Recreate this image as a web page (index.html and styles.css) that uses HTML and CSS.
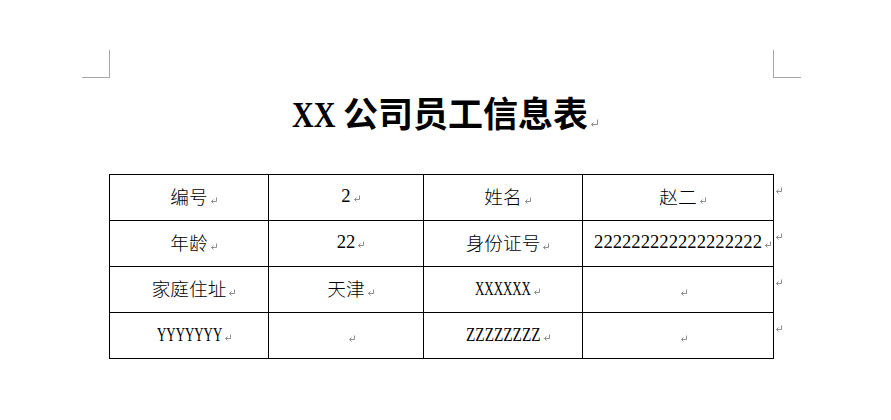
FILE: index.html
```html
<!DOCTYPE html>
<html lang="zh-CN">
<head>
<meta charset="utf-8">
<title>XX 公司员工信息表</title>
<link rel="stylesheet" href="styles.css">
</head>
<body>
<div class="page">
  <div class="marks">
    <span class="corner corner-l"></span>
    <span class="corner corner-r"></span>
  </div>
  <h1 class="title"><span class="narrow tx"><span>XX</span></span> 公司员工信息表<svg class="pm-t" width="9" height="8" viewBox="0 0 9 8"><path d="M7.5 0.5V5.5H1.5M3.5 3.5L1.5 5.5L3.5 7.5" fill="none" stroke="#8c8c8c" stroke-width="1"/></svg></h1>
  <table class="info">
    <colgroup>
      <col class="c1"><col class="c2"><col class="c3"><col class="c4"><col class="c5">
    </colgroup>
    <tr>
      <td>编号<i class="pm"><svg width="8" height="7" viewBox="0 0 8 7"><path d="M6.5 0.5V4.5H1.5M3.5 2.5L1.5 4.5L3.5 6.5" fill="none" stroke="#8f8f8f" stroke-width="1"/></svg></i></td>
      <td class="lat">2<i class="pm"><svg width="8" height="7" viewBox="0 0 8 7"><path d="M6.5 0.5V4.5H1.5M3.5 2.5L1.5 4.5L3.5 6.5" fill="none" stroke="#8f8f8f" stroke-width="1"/></svg></i></td>
      <td>姓名<i class="pm"><svg width="8" height="7" viewBox="0 0 8 7"><path d="M6.5 0.5V4.5H1.5M3.5 2.5L1.5 4.5L3.5 6.5" fill="none" stroke="#8f8f8f" stroke-width="1"/></svg></i></td>
      <td>赵二<i class="pm"><svg width="8" height="7" viewBox="0 0 8 7"><path d="M6.5 0.5V4.5H1.5M3.5 2.5L1.5 4.5L3.5 6.5" fill="none" stroke="#8f8f8f" stroke-width="1"/></svg></i></td>
      <td class="end"><svg width="8" height="7" viewBox="0 0 8 7"><path d="M6.5 0.5V4.5H1.5M3.5 2.5L1.5 4.5L3.5 6.5" fill="none" stroke="#8f8f8f" stroke-width="1"/></svg></td>
    </tr>
    <tr>
      <td>年龄<i class="pm"><svg width="8" height="7" viewBox="0 0 8 7"><path d="M6.5 0.5V4.5H1.5M3.5 2.5L1.5 4.5L3.5 6.5" fill="none" stroke="#8f8f8f" stroke-width="1"/></svg></i></td>
      <td class="lat">22<i class="pm"><svg width="8" height="7" viewBox="0 0 8 7"><path d="M6.5 0.5V4.5H1.5M3.5 2.5L1.5 4.5L3.5 6.5" fill="none" stroke="#8f8f8f" stroke-width="1"/></svg></i></td>
      <td>身份证号<i class="pm"><svg width="8" height="7" viewBox="0 0 8 7"><path d="M6.5 0.5V4.5H1.5M3.5 2.5L1.5 4.5L3.5 6.5" fill="none" stroke="#8f8f8f" stroke-width="1"/></svg></i></td>
      <td class="lat">222222222222222222<i class="pm"><svg width="8" height="7" viewBox="0 0 8 7"><path d="M6.5 0.5V4.5H1.5M3.5 2.5L1.5 4.5L3.5 6.5" fill="none" stroke="#8f8f8f" stroke-width="1"/></svg></i></td>
      <td class="end"><svg width="8" height="7" viewBox="0 0 8 7"><path d="M6.5 0.5V4.5H1.5M3.5 2.5L1.5 4.5L3.5 6.5" fill="none" stroke="#8f8f8f" stroke-width="1"/></svg></td>
    </tr>
    <tr>
      <td>家庭住址<i class="pm"><svg width="8" height="7" viewBox="0 0 8 7"><path d="M6.5 0.5V4.5H1.5M3.5 2.5L1.5 4.5L3.5 6.5" fill="none" stroke="#8f8f8f" stroke-width="1"/></svg></i></td>
      <td>天津<i class="pm"><svg width="8" height="7" viewBox="0 0 8 7"><path d="M6.5 0.5V4.5H1.5M3.5 2.5L1.5 4.5L3.5 6.5" fill="none" stroke="#8f8f8f" stroke-width="1"/></svg></i></td>
      <td><span class="narrow x6"><span>XXXXXX</span></span><i class="pm"><svg width="8" height="7" viewBox="0 0 8 7"><path d="M6.5 0.5V4.5H1.5M3.5 2.5L1.5 4.5L3.5 6.5" fill="none" stroke="#8f8f8f" stroke-width="1"/></svg></i></td>
      <td><i class="pm"><svg width="8" height="7" viewBox="0 0 8 7"><path d="M6.5 0.5V4.5H1.5M3.5 2.5L1.5 4.5L3.5 6.5" fill="none" stroke="#8f8f8f" stroke-width="1"/></svg></i></td>
      <td class="end"><svg width="8" height="7" viewBox="0 0 8 7"><path d="M6.5 0.5V4.5H1.5M3.5 2.5L1.5 4.5L3.5 6.5" fill="none" stroke="#8f8f8f" stroke-width="1"/></svg></td>
    </tr>
    <tr>
      <td><span class="narrow y7"><span>YYYYYYY</span></span><i class="pm"><svg width="8" height="7" viewBox="0 0 8 7"><path d="M6.5 0.5V4.5H1.5M3.5 2.5L1.5 4.5L3.5 6.5" fill="none" stroke="#8f8f8f" stroke-width="1"/></svg></i></td>
      <td><i class="pm"><svg width="8" height="7" viewBox="0 0 8 7"><path d="M6.5 0.5V4.5H1.5M3.5 2.5L1.5 4.5L3.5 6.5" fill="none" stroke="#8f8f8f" stroke-width="1"/></svg></i></td>
      <td><span class="narrow z8"><span>ZZZZZZZZ</span></span><i class="pm"><svg width="8" height="7" viewBox="0 0 8 7"><path d="M6.5 0.5V4.5H1.5M3.5 2.5L1.5 4.5L3.5 6.5" fill="none" stroke="#8f8f8f" stroke-width="1"/></svg></i></td>
      <td><i class="pm"><svg width="8" height="7" viewBox="0 0 8 7"><path d="M6.5 0.5V4.5H1.5M3.5 2.5L1.5 4.5L3.5 6.5" fill="none" stroke="#8f8f8f" stroke-width="1"/></svg></i></td>
      <td class="end"><svg width="8" height="7" viewBox="0 0 8 7"><path d="M6.5 0.5V4.5H1.5M3.5 2.5L1.5 4.5L3.5 6.5" fill="none" stroke="#8f8f8f" stroke-width="1"/></svg></td>
    </tr>
  </table>
</div>
</body>
</html>
```
FILE: styles.css
```css
html, body {
  margin: 0;
  padding: 0;
  background: #fff;
}
body {
  font-family: "Noto Sans CJK SC", "Noto Sans", sans-serif;
  color: #000;
}
.page {
  width: 891px;
  height: 420px;
  box-sizing: border-box;
  padding-top: 50px;
  overflow: hidden;
}
.marks {
  display: flex;
  justify-content: space-between;
  padding: 0 90px 0 82px;
}
.corner {
  display: block;
  width: 28px;
  height: 28px;
  box-sizing: border-box;
  border-bottom: 1px solid #a6a6a6;
}
.corner-l { border-right: 1px solid #a6a6a6; }
.corner-r { border-left: 1px solid #a6a6a6; }

.title {
  margin: 16px 0 0;
  text-align: center;
  font-size: 35px;
  line-height: 36px;
  font-weight: 700;
  white-space: nowrap;
}
.pm-t {
  margin-left: 2px;
  vertical-align: baseline;
}

.narrow {
  display: inline-block;
  white-space: nowrap;
  text-align: left;
  font-family: "Liberation Serif", serif;
}
.narrow > span {
  display: inline-block;
  transform-origin: 0 50%;
}
.tx { width: 43px; }
.tx > span { transform: scaleX(0.86); font-weight: 700; }
.x6 { width: 56px; }
.x6 > span { transform: scaleX(0.692); }
.y7 { width: 65px; }
.y7 > span { transform: scaleX(0.692); }
.z8 { width: 75px; }
.z8 > span { transform: scaleX(0.818); }

.info {
  margin: 40px 0 0 109px;
  border-collapse: collapse;
  table-layout: fixed;
}
.c1 { width: 159px; }
.c2 { width: 155px; }
.c3 { width: 159px; }
.c4 { width: 191px; }
.c5 { width: 12px; }
.info tr { height: 46px; }
.info td {
  border: 1px solid #000;
  padding: 0 0 3px;
  text-align: center;
  vertical-align: middle;
  font-size: 18.67px;
  line-height: 1;
  font-weight: 300;
  white-space: nowrap;
}
.info td.lat {
  font-family: "Liberation Serif", serif;
  font-weight: 400;
}
.info td.end {
  border: none;
  text-align: left;
  vertical-align: top;
  padding: 11px 0 0 1px;
  line-height: 0;
}
.pm {
  display: inline-block;
  width: 0;
  font-style: normal;
  vertical-align: baseline;
}
.pm svg {
  display: block;
  margin-left: 2px;
}
```
